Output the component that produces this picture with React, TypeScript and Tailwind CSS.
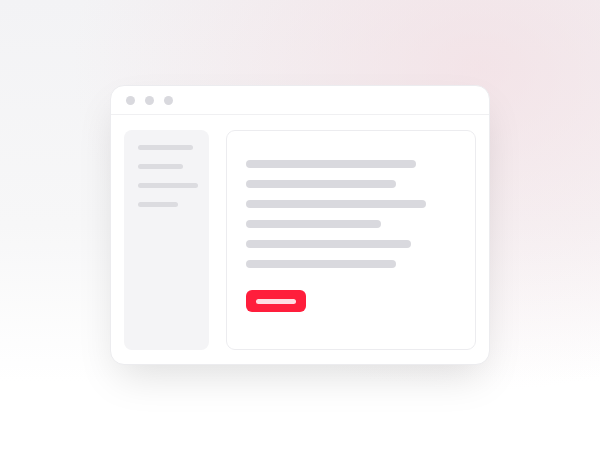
const sideBars = ["w-[55px]", "w-[45px]", "w-[60px]", "w-[40px]"];
const contentBars = [
  "w-[170px]",
  "w-[150px]",
  "w-[180px]",
  "w-[135px]",
  "w-[165px]",
  "w-[150px]",
];

export default function App() {
  return (
    <div className="flex h-[450px] w-[600px] items-start justify-center bg-[image:radial-gradient(ellipse_at_80%_15%,rgba(242,214,220,0.55),rgba(242,214,220,0)_60%),linear-gradient(to_bottom,#f3f3f5,#f7f7f8_50%,#ffffff_85%)] pt-[85px] font-['Inter',sans-serif]">
      <div className="flex h-[280px] w-[380px] flex-col overflow-hidden rounded-[14px] border border-[#ececef] bg-white shadow-[0_18px_40px_-8px_rgba(0,0,0,0.13)]">
        {/* title bar */}
        <div className="flex h-[29px] shrink-0 items-center gap-[10px] border-b border-[#f0f0f2] pl-[15px]">
          <span className="h-[9px] w-[9px] rounded-full bg-[#d9d9de]" />
          <span className="h-[9px] w-[9px] rounded-full bg-[#d9d9de]" />
          <span className="h-[9px] w-[9px] rounded-full bg-[#d9d9de]" />
        </div>

        <div className="flex flex-1 gap-[17px] px-[13px] pb-[14px] pt-[15px]">
          {/* sidebar */}
          <div className="flex w-[85px] flex-col gap-[14px] rounded-[8px] bg-[#f4f4f6] pl-[14px] pt-[15px]">
            {sideBars.map((w, i) => (
              <div key={i} className={`h-[5px] rounded-full bg-[#dcdce0] ${w}`} />
            ))}
          </div>

          {/* content */}
          <div className="flex flex-1 flex-col rounded-[9px] border border-[#ececef] pl-[19px] pt-[29px]">
            <div className="flex flex-col gap-[12px]">
              {contentBars.map((w, i) => (
                <div key={i} className={`h-[8px] rounded-full bg-[#d9d9de] ${w}`} />
              ))}
            </div>
            <div className="mt-[22px] flex h-[22px] w-[60px] items-center justify-center rounded-[6px] bg-[#ff1e3c]">
              <div className="h-[5px] w-[40px] rounded-full bg-white/85" />
            </div>
          </div>
        </div>
      </div>
    </div>
  );
}
